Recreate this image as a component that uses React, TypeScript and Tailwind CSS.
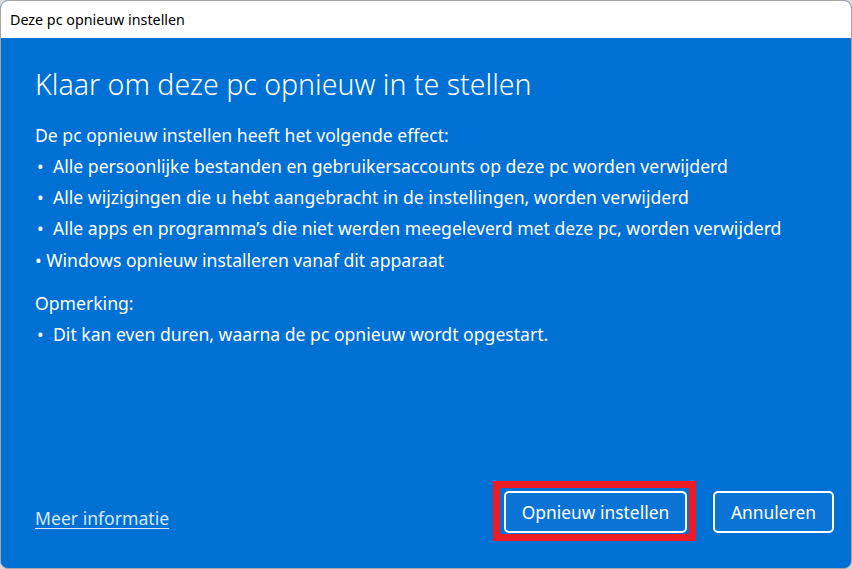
export default function App() {
  const bullets = [
    "Alle persoonlijke bestanden en gebruikersaccounts op deze pc worden verwijderd",
    "Alle wijzigingen die u hebt aangebracht in de instellingen, worden verwijderd",
    "Alle apps en programma’s die niet werden meegeleverd met deze pc, worden verwijderd",
  ];

  return (
    <div className="w-[852px] h-[569px] bg-[#d9d9d9] font-['Noto_Sans',sans-serif]">
      <div className="w-full h-full flex flex-col rounded-[8px] overflow-hidden border border-[#a6a6a6] bg-[#0071d4]">
        {/* Title bar */}
        <div className="h-[37px] bg-white flex items-center pl-[9px] text-[14.3px] text-black">
          Deze pc opnieuw instellen
        </div>

        {/* Content */}
        <div className="flex-1 flex flex-col pl-[34px] pr-[17px] pb-[27px] text-white">
          <h1 className="mt-[26px] text-[28.5px] font-light leading-[40px]">
            Klaar om deze pc opnieuw in te stellen
          </h1>

          <div className="mt-[15.5px] text-[17.6px] leading-[31.25px]">
            <p>De pc opnieuw instellen heeft het volgende effect:</p>
            {bullets.map((b) => (
              <p key={b} className="flex">
                <span className="w-[18px] pl-[2px]">•</span>
                <span>{b}</span>
              </p>
            ))}
            <p>• Windows opnieuw installeren vanaf dit apparaat</p>

            <p className="mt-[12px]">Opmerking:</p>
            <p className="flex">
              <span className="w-[18px] pl-[2px]">•</span>
              <span>Dit kan even duren, waarna de pc opnieuw wordt opgestart.</span>
            </p>
          </div>

          {/* Footer */}
          <div className="mt-auto flex items-end">
            <a className="mb-[10px] text-[17.6px] text-[#d6e8fa] underline underline-offset-[3px] decoration-1">
              Meer informatie
            </a>
            <div className="ml-auto flex items-end gap-[17px]">
              <div className="border-[7px] border-[#ed1c24] pl-[4px] pr-[2px] pt-[3px] pb-[1px]">
                <button className="w-[183px] h-[42px] rounded-[5px] border-2 border-white bg-[#0a74d6] text-[17.4px] text-white">
                  Opnieuw instellen
                </button>
              </div>
              <button className="mb-[8px] w-[121px] h-[42px] rounded-[5px] border-2 border-white bg-[#0a74d6] text-[17.4px] text-white">
                Annuleren
              </button>
            </div>
          </div>
        </div>
      </div>
    </div>
  );
}
